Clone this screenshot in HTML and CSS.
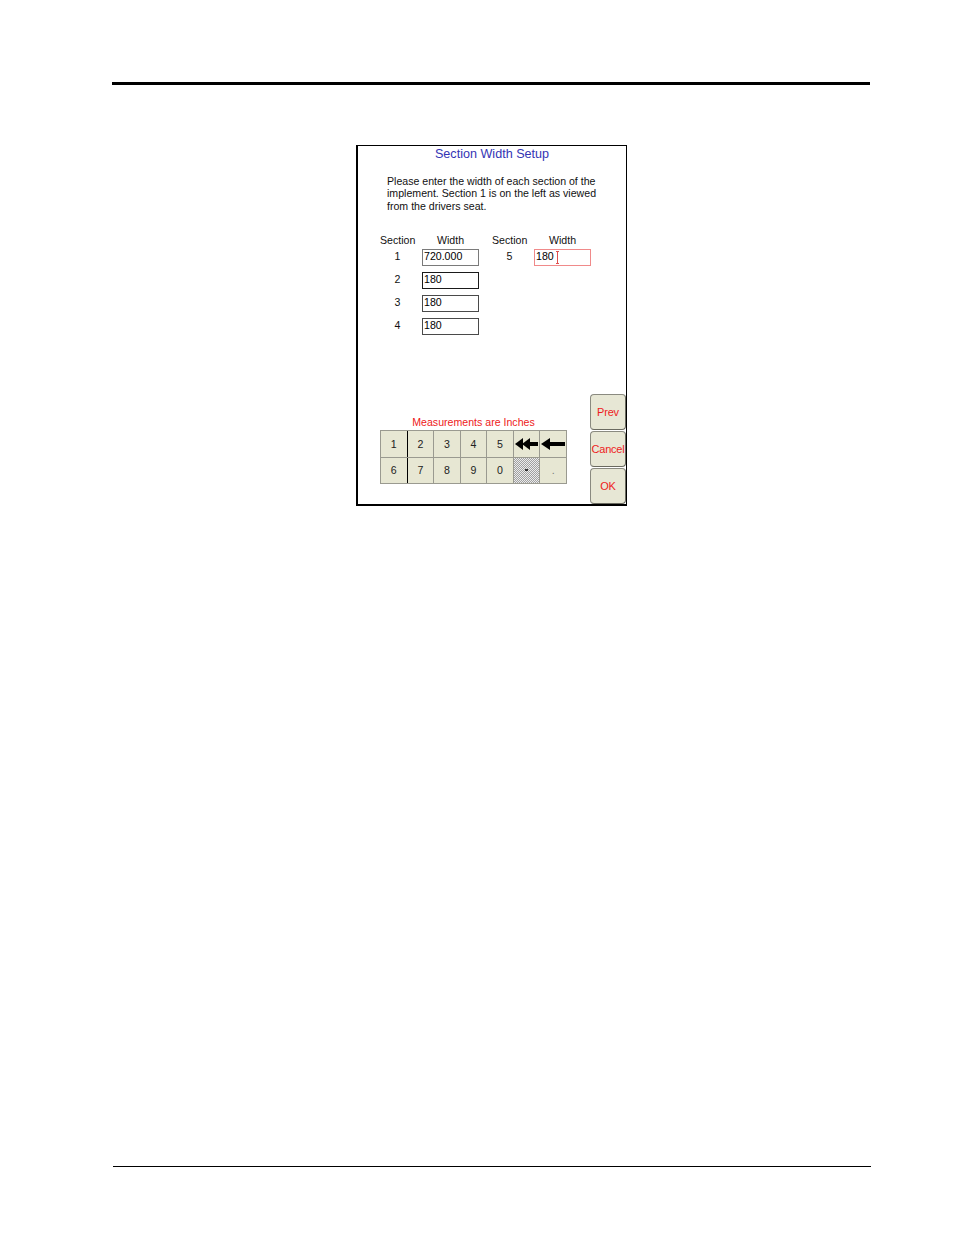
FILE: index.html
```html
<!DOCTYPE html>
<html>
<head>
<meta charset="utf-8">
<title>Section Width Setup</title>
<link rel="stylesheet" href="styles.css">
</head>
<body>
<div class="page">
  <div class="rule-top"></div>
  <div class="frame">
    <div class="title">Section Width Setup</div>
    <div class="intro">Please enter the width of each section of the<br>implement. Section 1 is on the left as viewed<br>from the drivers seat.</div>
    <div class="sections">
      <div class="group">
        <div class="hdr"><span>Section</span><span>Width</span></div>
        <div class="rows">
          <span class="num">1</span><span class="field f-gray">720.000</span>
          <span class="num">2</span><span class="field f-black">180</span>
          <span class="num">3</span><span class="field f-dark">180</span>
          <span class="num">4</span><span class="field f-dark">180</span>
        </div>
      </div>
      <div class="group">
        <div class="hdr"><span>Section</span><span>Width</span></div>
        <div class="rows">
          <span class="num">5</span><span class="field f-active">180<span class="caret"></span></span>
        </div>
      </div>
    </div>
    <div class="bottom">
      <div class="pad-area">
        <div class="units">Measurements are Inches</div>
        <div class="keypad">
          <div class="key first">1</div>
          <div class="key">2</div>
          <div class="key">3</div>
          <div class="key">4</div>
          <div class="key">5</div>
          <div class="key"><svg width="24" height="12" viewBox="0 0 24 12"><polygon points="0,6 8,0 8,12" fill="#000"/><polygon points="7,6 15,0 15,12" fill="#000"/><rect x="14" y="4" width="9" height="4" fill="#000"/></svg></div>
          <div class="key"><svg width="24" height="12" viewBox="0 0 24 12"><polygon points="0,6 9,0 9,12" fill="#000"/><rect x="8" y="4" width="16" height="4" fill="#000"/></svg></div>
          <div class="key first">6</div>
          <div class="key">7</div>
          <div class="key">8</div>
          <div class="key">9</div>
          <div class="key">0</div>
          <div class="key hatch"><span class="minus"></span></div>
          <div class="key dot">.</div>
        </div>
      </div>
      <div class="side">
        <div class="btn">Prev</div>
        <div class="btn">Cancel</div>
        <div class="btn">OK</div>
      </div>
    </div>
  </div>
  <div class="rule-bottom"></div>
</div>
</body>
</html>
```
FILE: styles.css
```css
* { box-sizing: border-box; }
html, body { margin: 0; padding: 0; background: #fff; }
body { font-family: "Liberation Sans", Arial, sans-serif; color: #000; }

.page {
  width: 954px;
  height: 1235px;
  padding-top: 82px;
  overflow: hidden;
}

.rule-top {
  margin-left: 112px;
  width: 758px;
  height: 3px;
  background: #000;
}

.frame {
  margin: 60px 0 0 356px;
  width: 271px;
  height: 361px;
  border-style: solid;
  border-color: #000;
  border-width: 1px 1px 2px 2px;
  display: flex;
  flex-direction: column;
}

.title {
  margin-top: 1px;
  font-size: 12.6px;
  line-height: 14px;
  text-align: center;
  color: #3434b4;
  white-space: nowrap;
}

.intro {
  margin-top: 14px;
  padding-left: 29px;
  font-size: 10.6px;
  line-height: 12.3px;
  white-space: nowrap;
  color: #111;
}

.sections {
  margin-top: 22px;
  padding-left: 22px;
  display: flex;
  gap: 13px;
  align-items: flex-start;
}

.group { width: 99px; }

.hdr {
  display: grid;
  grid-template-columns: 35px 57px;
  column-gap: 7px;
  height: 15px;
  font-size: 10.6px;
  line-height: 12px;
  color: #111;
}
.hdr span { text-align: center; white-space: nowrap; }

.rows {
  display: grid;
  grid-template-columns: 35px 57px;
  grid-auto-rows: 17px;
  column-gap: 7px;
  row-gap: 6px;
  font-size: 10.6px;
}

.num {
  text-align: center;
  line-height: 15px;
  color: #111;
}

.field {
  position: relative;
  display: block;
  height: 17px;
  border: 1px solid #777;
  padding-left: 1px;
  line-height: 13px;
  background: #fff;
  color: #000;
}
.f-gray { border-color: #7a7a7a; }
.f-black { border-color: #1a1a1a; }
.f-dark { border-color: #4a4a4a; }
.f-active { border-color: #f08a8a; }

.caret {
  position: absolute;
  left: 22px;
  top: 1px;
  width: 3px;
  height: 13px;
  border-left: 1px solid #e05050;
}
.caret::before, .caret::after {
  content: "";
  position: absolute;
  left: -2px;
  width: 3px;
  height: 1px;
  background: #e05050;
}
.caret::before { top: 0; }
.caret::after { bottom: 0; }

.bottom {
  margin-top: auto;
  height: 110px;
  display: flex;
}

.pad-area {
  width: 232px;
  padding-top: 22px;
  padding-left: 22px;
}

.units {
  width: 187px;
  font-size: 10.6px;
  line-height: 12px;
  text-align: center;
  color: #ee2020;
  margin-bottom: 2px;
  white-space: nowrap;
}

.keypad {
  width: 187px;
  height: 54px;
  display: grid;
  grid-template-columns: repeat(7, 1fr);
  grid-template-rows: repeat(2, 1fr);
  gap: 1px;
  background: #9a9a90;
  border: 1px solid #9a9a90;
}

.key {
  background: #e7e7d3;
  display: flex;
  align-items: center;
  justify-content: center;
  font-size: 10.6px;
  color: #222;
}
.key.first { box-shadow: 1px 0 0 #000; position: relative; z-index: 1; }
.key svg { display: block; }

.hatch {
  background: repeating-conic-gradient(#a0a0a0 0 25%, #ececec 0 50%) 0 0 / 2px 2px;
}
.minus { display: block; width: 3px; height: 2px; background: #333; }
.dot { color: #777; }

.side {
  width: 36px;
  display: flex;
  flex-direction: column;
  gap: 1px;
}

.btn {
  height: 36px;
  background: #e7e7d5;
  border: 1px solid #8a8a80;
  border-right-color: #6a6a60;
  border-bottom-color: #6a6a60;
  border-radius: 4px;
  display: flex;
  align-items: center;
  justify-content: center;
  font-size: 11px;
  color: #ee1c1c;
  white-space: nowrap;
  letter-spacing: -0.2px;
}

.rule-bottom {
  margin: 660px 0 0 113px;
  width: 758px;
  height: 1px;
  background: #000;
}
```
